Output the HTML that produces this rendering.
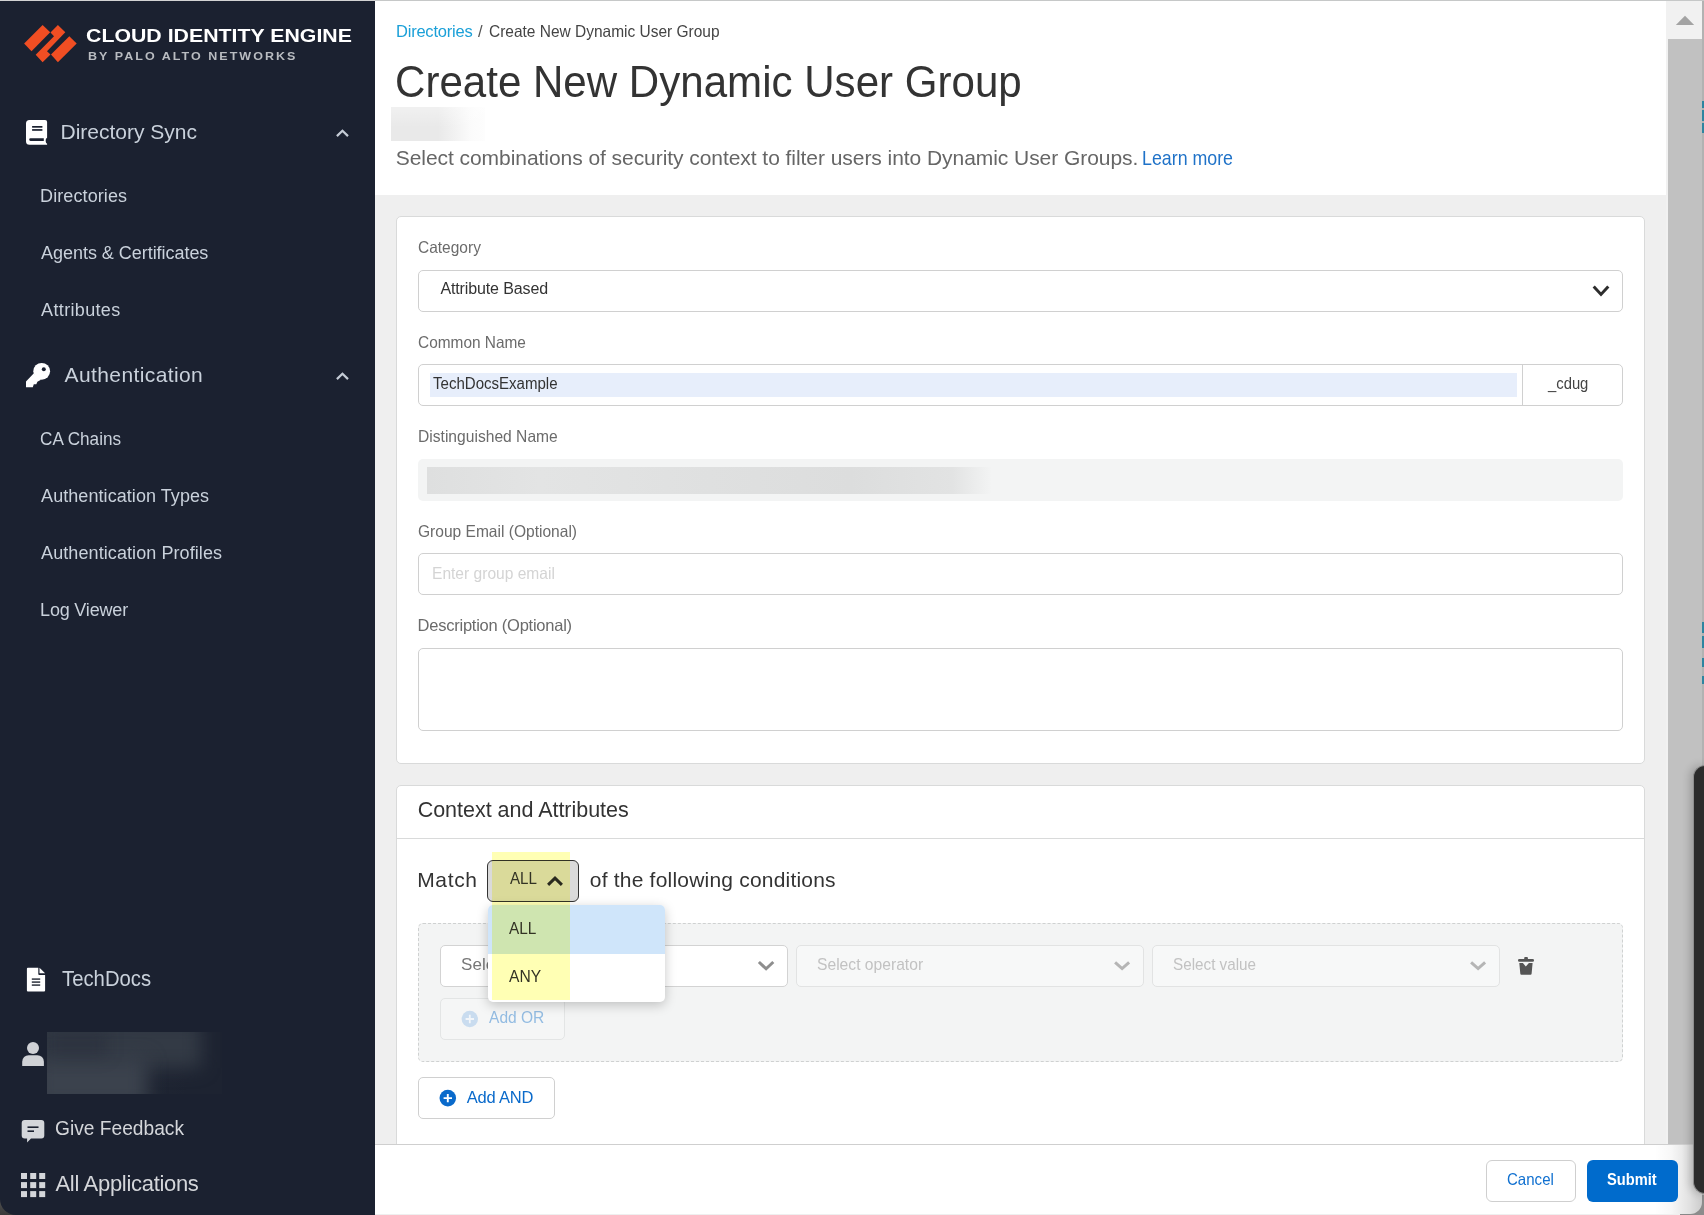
<!DOCTYPE html>
<html><head><meta charset="utf-8"><title>Create New Dynamic User Group</title>
<style>
html,body{margin:0;padding:0;width:1704px;height:1215px;overflow:hidden;background:#efefef;font-family:"Liberation Sans",sans-serif}
.a{position:absolute;box-sizing:border-box}
.t{position:absolute;line-height:1;white-space:nowrap}
svg{position:absolute;overflow:visible}
</style></head><body>
<!-- desktop corners -->
<div class="a" style="left:0;top:1190px;width:30px;height:25px;background:linear-gradient(0deg,#3a3a3a,#5e5e5e)"></div>
<div class="a" style="left:1680px;top:1190px;width:24px;height:25px;background:#888"></div>

<!-- main header -->
<div class="a" style="left:375px;top:0;width:1291px;height:195px;background:#fff"></div>
<div class="a" style="left:391px;top:107px;width:94px;height:34px;background:linear-gradient(180deg,rgba(255,255,255,0.35),rgba(255,255,255,0) 60%),linear-gradient(90deg,#e9e9e9 0%,#e9e9e9 50%,#f2f2f2 68%,#fbfbfb 85%,#fdfdfd 100%)"></div>
<div class="t" style="left:396.00px;top:22.58px;font-size:16.5px;color:#1ba0d8;letter-spacing:-0.220px;">Directories</div>
<div class="t" style="left:478.00px;top:22.58px;font-size:16.5px;color:#555555;">/</div>
<div class="t" style="left:489.46px;top:22.58px;font-size:16.5px;color:#444444;transform:scaleX(0.9381);transform-origin:0 0;">Create New Dynamic User Group</div>
<div class="t" style="left:395.29px;top:60.40px;font-size:44px;color:#333333;transform:scaleX(0.9563);transform-origin:0 0;">Create New Dynamic User Group</div>
<div class="t" style="left:395.70px;top:147.35px;font-size:21px;color:#666666;letter-spacing:-0.054px;">Select combinations of security context to filter users into Dynamic User Groups.</div>
<div class="t" style="left:1142.10px;top:147.35px;font-size:21px;color:#1f72c8;transform:scaleX(0.8476);transform-origin:0 0;">Learn more</div>


<!-- card 1 -->
<div class="a" style="left:396px;top:216px;width:1249px;height:548px;background:#fff;border:1px solid #d9dada;border-radius:5px"></div>
<div class="t" style="left:417.66px;top:239.28px;font-size:16.5px;color:#6b6b6b;transform:scaleX(0.9394);transform-origin:0 0;">Category</div>

<div class="a" style="left:418px;top:270px;width:1205px;height:42px;background:#fff;border:1px solid #d0d0d0;border-radius:5px"></div>
<div class="t" style="left:440.40px;top:281.20px;font-size:16px;color:#333333;letter-spacing:-0.121px;">Attribute Based</div>

<svg style="left:0;top:0" width="1" height="1"><polyline points="1593.7,286.5 1601,294.4 1608.3,286.5" fill="none" stroke="#2d2d2d" stroke-width="3"/></svg>
<div class="t" style="left:417.87px;top:333.88px;font-size:16.5px;color:#6b6b6b;transform:scaleX(0.9342);transform-origin:0 0;">Common Name</div>

<div class="a" style="left:418px;top:364px;width:1205px;height:42px;background:#fff;border:1px solid #d0d0d0;border-radius:5px"></div>
<div class="a" style="left:430px;top:373px;width:1087px;height:24px;background:#e7eefb"></div>
<div class="a" style="left:1522px;top:365px;width:1px;height:40px;background:#d0d0d0"></div>
<div class="t" style="left:433.20px;top:376.20px;font-size:16px;color:#333333;transform:scaleX(0.9402);transform-origin:0 0;">TechDocsExample</div>
<div class="t" style="left:1547.50px;top:376.10px;font-size:16px;color:#444444;transform:scaleX(0.9256);transform-origin:0 0;">_cdug</div>

<div class="t" style="left:417.85px;top:427.78px;font-size:16.5px;color:#6b6b6b;transform:scaleX(0.9466);transform-origin:0 0;">Distinguished Name</div>

<div class="a" style="left:418px;top:459px;width:1205px;height:42px;background:#f3f4f4;border-radius:5px"></div>
<div class="a" style="left:427px;top:467px;width:565px;height:27px;background:linear-gradient(90deg,#dedfdf 0%,#e3e4e4 20%,#dfe0e0 50%,#dcdddd 75%,#e2e3e3 93%,#f3f4f4 100%)"></div>
<div class="t" style="left:417.66px;top:523.27px;font-size:16.5px;color:#6b6b6b;transform:scaleX(0.9425);transform-origin:0 0;">Group Email (Optional)</div>

<div class="a" style="left:418px;top:553px;width:1205px;height:42px;background:#fff;border:1px solid #d0d0d0;border-radius:5px"></div>
<div class="t" style="left:432.06px;top:565.27px;font-size:16.5px;color:#d4d4d4;transform:scaleX(0.9437);transform-origin:0 0;">Enter group email</div>

<div class="t" style="left:417.60px;top:617.38px;font-size:16.5px;color:#6b6b6b;letter-spacing:-0.243px;">Description (Optional)</div>

<div class="a" style="left:418px;top:648px;width:1205px;height:83px;background:#fff;border:1px solid #d0d0d0;border-radius:5px"></div>

<!-- card 2 -->
<div class="a" style="left:396px;top:785px;width:1249px;height:420px;background:#fff;border:1px solid #d9dada;border-radius:5px"></div>
<div class="a" style="left:397px;top:838px;width:1247px;height:1px;background:#d9dada"></div>
<div class="t" style="left:417.70px;top:799.73px;font-size:21.5px;color:#333333;letter-spacing:-0.024px;">Context and Attributes</div>

<div class="t" style="left:417.20px;top:869.15px;font-size:21px;color:#333333;letter-spacing:0.650px;">Match</div>
<div class="t" style="left:589.80px;top:868.75px;font-size:21px;color:#333333;letter-spacing:0.204px;">of the following conditions</div>

<div class="a" style="left:418px;top:923px;width:1205px;height:139px;background:#f3f4f4;border:1px dashed #cfd1d1;border-radius:5px"></div>
<div class="a" style="left:440px;top:945px;width:348px;height:42px;background:#fff;border:1px solid #d3d3d3;border-radius:5px"></div>
<div class="t" style="left:461.10px;top:956.15px;font-size:17px;color:#777777;">Sele</div>

<svg style="left:0;top:0" width="1" height="1"><polyline points="758.9,962 766.1,968.8 773.3,962" fill="none" stroke="#8e8e8e" stroke-width="3"/></svg>
<div class="a" style="left:796px;top:945px;width:348px;height:42px;background:#f7f8f8;border:1px solid #e2e3e3;border-radius:5px"></div>
<div class="t" style="left:817.38px;top:955.75px;font-size:17px;color:#c2c2c2;transform:scaleX(0.9202);transform-origin:0 0;">Select operator</div>

<svg style="left:0;top:0" width="1" height="1"><polyline points="1115.1,962.4 1122.1,968.6 1129.1,962.4" fill="none" stroke="#b5b5b5" stroke-width="3"/></svg>
<div class="a" style="left:1152px;top:945px;width:348px;height:42px;background:#f7f8f8;border:1px solid #e2e3e3;border-radius:5px"></div>
<div class="t" style="left:1173.40px;top:955.75px;font-size:17px;color:#c2c2c2;transform:scaleX(0.8967);transform-origin:0 0;">Select value</div>

<svg style="left:0;top:0" width="1" height="1"><polyline points="1471.1,962.4 1478.1,968.6 1485.1,962.4" fill="none" stroke="#b5b5b5" stroke-width="3"/></svg>
<svg style="left:0;top:0" width="1" height="1"><path d="M1524.2,959.4 v-1.4 a0.9,0.9 0 0 1 0.9,-0.9 h1.9 a0.9,0.9 0 0 1 0.9,0.9 v1.4 z" fill="#555"/><rect x="1518" y="959.1" width="16" height="2.6" rx="1.3" fill="#555"/><path d="M1519.3,963 H1522.9 L1525.8,966.4 L1528.9,963 H1532.6 L1531.6,973.8 Q1531.5,974.8 1530.5,974.8 H1521.4 Q1520.4,974.8 1520.3,973.8 Z" fill="#555"/></svg>
<div class="a" style="left:440px;top:998px;width:125px;height:42px;background:#f5f6f6;border:1px solid #e3e5e5;border-radius:5px"></div>
<svg style="left:0;top:0" width="1" height="1"><circle cx="469.8" cy="1019" r="8.2" fill="#c9dcef"/><path d="M469.8,1014.8v8.4M465.6,1019h8.4" stroke="#f2f6fa" stroke-width="1.8"/></svg>
<div class="t" style="left:488.60px;top:1008.98px;font-size:16.5px;color:#93bce2;transform:scaleX(0.9431);transform-origin:0 0;">Add OR</div>

<div class="a" style="left:418px;top:1077px;width:137px;height:42px;background:#fff;border:1px solid #d0d0d0;border-radius:5px"></div>
<svg style="left:0;top:0" width="1" height="1"><circle cx="447.8" cy="1098.1" r="8.3" fill="#0a6acb"/><path d="M447.8,1093.9v8.4M443.6,1098.1h8.4" stroke="#fff" stroke-width="1.9"/></svg>
<div class="t" style="left:466.80px;top:1089.27px;font-size:16.5px;color:#0a6acb;letter-spacing:-0.217px;">Add AND</div>


<!-- match button -->
<div class="a" style="left:487px;top:860px;width:92px;height:42px;background:#dadada;border:1px solid #333;border-radius:6px"></div>
<div class="t" style="left:509.50px;top:871.00px;font-size:16px;color:#333333;transform:scaleX(0.9464);transform-origin:0 0;">ALL</div>

<svg style="left:0;top:0" width="1" height="1"><polyline points="548.1,884.8 555,878.1 561.9,884.8" fill="none" stroke="#2a2a2a" stroke-width="3"/></svg>
<!-- dropdown menu -->
<div class="a" style="left:488px;top:905px;width:177px;height:97px;background:#fff;border-radius:5px;box-shadow:0 3px 12px rgba(0,0,0,0.22);overflow:hidden"><div class="a" style="left:0;top:0;width:177px;height:49px;background:#cfe5fa"></div></div>
<div class="t" style="left:509.00px;top:919.98px;font-size:16.5px;color:#333333;transform:scaleX(0.9310);transform-origin:0 0;">ALL</div>
<div class="t" style="left:509.00px;top:967.98px;font-size:16.5px;color:#333333;transform:scaleX(0.9471);transform-origin:0 0;">ANY</div>

<!-- yellow highlight -->
<div class="a" style="left:492px;top:852px;width:78px;height:148px;background:#ffffb4;mix-blend-mode:multiply"></div>


<!-- scrollbar -->
<div class="a" style="left:1666px;top:0;width:36px;height:1144px;background:#f1f1f1"></div>
<div class="a" style="left:1668px;top:39px;width:34px;height:1105px;background:#c1c1c1"></div>
<svg style="left:0;top:0" width="1" height="1"><polygon points="1675.8,25 1685,15.8 1694.2,25" fill="#a3a3a3"/></svg>
<div class="a" style="left:1702px;top:0;width:2px;height:1195px;background:#b2b2b2"></div>
<div class="a" style="left:1702px;top:101px;width:2px;height:7px;background:#2e84a0"></div>
<div class="a" style="left:1702px;top:110px;width:2px;height:11px;background:#2e84a0"></div>
<div class="a" style="left:1702px;top:123px;width:2px;height:10px;background:#2e84a0"></div>
<div class="a" style="left:1702px;top:622px;width:2px;height:11px;background:#2e84a0"></div>
<div class="a" style="left:1702px;top:636px;width:2px;height:12px;background:#2e84a0"></div>
<div class="a" style="left:1702px;top:658px;width:2px;height:9px;background:#2e84a0"></div>
<div class="a" style="left:1702px;top:676px;width:2px;height:8px;background:#2e84a0"></div>
<div class="a" style="left:1690px;top:1195px;width:14px;height:20px;background:#8c8c8c"></div>
<!-- footer panel -->
<div class="a" style="left:375px;top:1144px;width:1327px;height:70px;background:#fff;border-top:1px solid #cfcfcf;border-bottom-right-radius:12px;overflow:hidden"><div class="a" style="left:1280px;top:0;width:47px;height:70px;background:linear-gradient(90deg,rgba(0,0,0,0) 0%,rgba(0,0,0,0.03) 35%,rgba(0,0,0,0.12) 75%,rgba(0,0,0,0.2) 100%)"></div></div>
<div class="a" style="left:1486px;top:1160px;width:90px;height:42px;background:#fff;border:1px solid #cfcfcf;border-radius:6px"></div>
<div class="t" style="left:1507.29px;top:1170.97px;font-size:16.5px;color:#1070d0;transform:scaleX(0.9120);transform-origin:0 0;">Cancel</div>

<div class="a" style="left:1587px;top:1160px;width:91px;height:42px;background:#006bcc;border-radius:6px"></div>
<div class="t" style="left:1607.11px;top:1170.97px;font-size:16.5px;color:#ffffff;font-weight:700;transform:scaleX(0.8873);transform-origin:0 0;">Submit</div>

<div class="a" style="left:1693px;top:765px;width:14px;height:429px;background:#2b2b2b;border:1px solid #8e8e8e;border-right:none;border-radius:12px 0 0 12px;box-shadow:-3px 0 9px rgba(0,0,0,0.2)"></div>

<!-- top line -->
<div class="a" style="left:375px;top:0;width:1329px;height:1px;background:#c6c8c8"></div>

<!-- sidebar -->
<div class="a" style="left:0;top:0;width:375px;height:1215px;background:#1b2130;border-bottom-left-radius:16px;border-top:1px solid #d3d3d3"></div>
<svg style="left:0;top:0" width="1" height="1">
<polygon points="42.6,24.9 50.2,32.3 31.5,51.3 24.1,43.4" fill="#f04e23"/>
<polygon points="57.9,24.9 65.3,32.3 47,51.3 50.5,54.5 42.6,62.2 35.7,54.8 54,36.2 50.5,32.5" fill="#f04e23"/>
<polygon points="69.3,36.2 76.7,43.4 57.9,62.2 51,54.5" fill="#f04e23"/>
</svg>
<div class="t" style="left:86.25px;top:26.77px;font-size:18.5px;color:#ffffff;font-weight:700;letter-spacing:0.015px;transform:scaleX(1.1500);transform-origin:0 0;">CLOUD IDENTITY ENGINE</div>
<div class="t" style="left:88.25px;top:51.60px;font-size:10px;color:#b9bcc1;font-weight:700;letter-spacing:1.628px;transform:scaleX(1.2500);transform-origin:0 0;">BY PALO ALTO NETWORKS</div>

<!-- book icon -->
<svg style="left:0;top:0" width="1" height="1">
<path d="M29.5,120 h15.6 a2,2 0 0 1 2,2 v15.8 c-0.9,0.4 -1.4,1.5 -1.4,3 s0.5,2.6 1.4,3 v0.9 h-17.6 a3.5,3.5 0 0 1 -3.5,-3.5 v-17.7 a3.5,3.5 0 0 1 3.5,-3.5 z" fill="#fff"/>
<rect x="32.1" y="126" width="10.3" height="1.7" fill="#1b2130"/>
<rect x="32.1" y="129.1" width="10.3" height="1.7" fill="#1b2130"/>
<path d="M30.5,138.3 h13.3 v2.6 h-13.3 a1.3,1.3 0 0 1 0,-2.6 z" fill="#1b2130"/>
</svg>
<svg style="left:0;top:0" width="1" height="1"><polyline points="336.9,136.1 342.45,130.7 348,136.1" fill="none" stroke="#c5ccd6" stroke-width="2.2"/></svg>
<div class="t" style="left:60.50px;top:121.15px;font-size:21px;color:#c9d1db;">Directory Sync</div>
<div class="t" style="left:40.10px;top:186.70px;font-size:18px;color:#c9d1db;letter-spacing:0.090px;">Directories</div>
<div class="t" style="left:41.10px;top:243.70px;font-size:18px;color:#c9d1db;letter-spacing:-0.040px;">Agents &amp; Certificates</div>
<div class="t" style="left:41.10px;top:300.70px;font-size:18px;color:#c9d1db;letter-spacing:0.344px;">Attributes</div>

<!-- key icon -->
<svg style="left:0;top:0" width="1" height="1">
<circle cx="41.7" cy="371.3" r="8.4" fill="#fff"/>
<polygon points="33.6,373.4 26,381.4 26,387.3 32.8,387.3 33.8,384.3 36.3,384.3 37.4,381.7 41,379.8" fill="#fff"/>
<circle cx="43.8" cy="369.3" r="2" fill="#1b2130"/>
</svg>
<svg style="left:0;top:0" width="1" height="1"><polyline points="336.9,379.1 342.45,373.7 348,379.1" fill="none" stroke="#c5ccd6" stroke-width="2.2"/></svg>
<div class="t" style="left:64.60px;top:364.15px;font-size:21px;color:#c9d1db;letter-spacing:0.392px;">Authentication</div>
<div class="t" style="left:40.15px;top:429.70px;font-size:18px;color:#c9d1db;transform:scaleX(0.9536);transform-origin:0 0;">CA Chains</div>
<div class="t" style="left:41.10px;top:486.70px;font-size:18px;color:#c9d1db;letter-spacing:0.063px;">Authentication Types</div>
<div class="t" style="left:41.10px;top:543.70px;font-size:18px;color:#c9d1db;letter-spacing:0.082px;">Authentication Profiles</div>
<div class="t" style="left:40.10px;top:600.70px;font-size:18px;color:#c9d1db;letter-spacing:-0.189px;">Log Viewer</div>

<!-- doc icon -->
<svg style="left:0;top:0" width="1" height="1">
<path d="M27.9,967.8 h10.4 v6.3 a0.9,0.9 0 0 0 0.9,0.9 h5.9 v15.5 a1,1 0 0 1 -1,1 h-16.2 a1,1 0 0 1 -1,-1 v-21.7 a1,1 0 0 1 1,-1 z" fill="#fff"/>
<path d="M39.5,967.8 l5.6,5.4 h-5.6 z" fill="#fff"/>
<rect x="31.8" y="978.3" width="8.4" height="1.6" fill="#3b404b"/>
<rect x="31.8" y="981.3" width="8.4" height="1.6" fill="#3b404b"/>
<rect x="31.8" y="984.3" width="8.4" height="1.6" fill="#3b404b"/>
</svg>
<div class="t" style="left:61.80px;top:967.60px;font-size:22px;color:#c9d1db;transform:scaleX(0.9229);transform-origin:0 0;">TechDocs</div>

<!-- user -->
<svg style="left:0;top:0" width="1" height="1">
<circle cx="33" cy="1048" r="6" fill="#d0d2d6"/>
<path d="M22.2,1066 v-4.3 a6.5,6.5 0 0 1 6.5,-6.5 h8.7 a6.5,6.5 0 0 1 6.5,6.5 v4.3 z" fill="#d0d2d6"/>
</svg>
<div class="a" style="left:47px;top:1032px;width:175px;height:62px;background:linear-gradient(90deg,#262c38,#1d2331 80%);overflow:hidden">
<div class="a" style="left:-12px;top:-12px;width:166px;height:48px;background:#333a45;filter:blur(9px)"></div>
<div class="a" style="left:-12px;top:26px;width:112px;height:50px;background:#3b424d;filter:blur(9px)"></div>
<div class="a" style="left:0;top:0;width:60px;height:25px;background:rgba(27,33,48,0.25);filter:blur(8px)"></div>
</div>
<!-- feedback -->
<svg style="left:0;top:0" width="1" height="1">
<path d="M24.7,1120 h16.6 a3,3 0 0 1 3,3 v12.5 a3,3 0 0 1 -3,3 h-10.3 l-3.9,4.1 v-4.1 h-2.4 a3,3 0 0 1 -3,-3 v-12.5 a3,3 0 0 1 3,-3 z" fill="#d4d6da"/>
<rect x="27.5" y="1126.4" width="11" height="1.6" fill="#1b2130"/>
<rect x="27.5" y="1130.4" width="6.5" height="1.6" fill="#1b2130"/>
</svg>
<div class="t" style="left:54.86px;top:1117.58px;font-size:20.5px;color:#d4d6da;transform:scaleX(0.9358);transform-origin:0 0;">Give Feedback</div>

<!-- grid -->
<svg style="left:0;top:0" width="1" height="1" fill="#d4d6da">
<rect x="21" y="1173" width="6" height="6"/><rect x="30.2" y="1173" width="6" height="6"/><rect x="39.2" y="1173" width="6" height="6"/>
<rect x="21" y="1182.1" width="6" height="6"/><rect x="30.2" y="1182.1" width="6" height="6"/><rect x="39.2" y="1182.1" width="6" height="6"/>
<rect x="21" y="1191.1" width="6" height="6"/><rect x="30.2" y="1191.1" width="6" height="6"/><rect x="39.2" y="1191.1" width="6" height="6"/>
</svg>
<div class="t" style="left:55.50px;top:1173.30px;font-size:22px;color:#d4d6da;letter-spacing:-0.307px;">All Applications</div>

</body></html>
